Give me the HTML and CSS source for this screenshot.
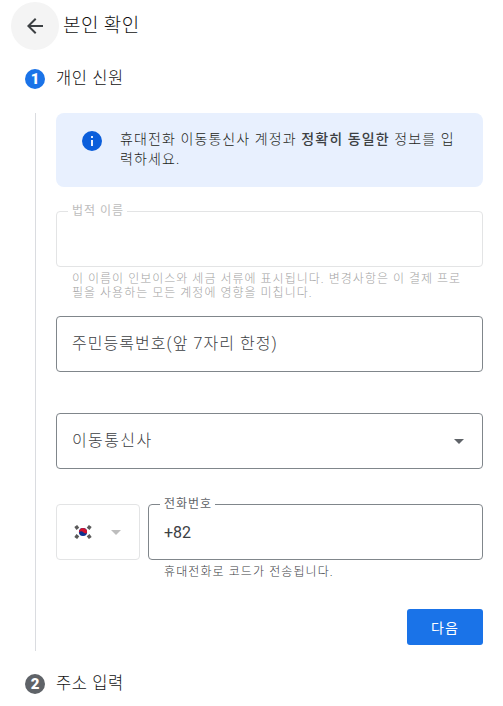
FILE: index.html
```html
<!DOCTYPE html>
<html lang="ko">
<head>
<meta charset="utf-8">
<title>본인 확인</title>
<link rel="stylesheet" href="styles.css">
</head>
<body>
<header class="header">
  <button class="back" aria-label="뒤로">
    <svg width="24" height="24" viewBox="0 0 24 24"><path fill="#3c4043" d="M20 11H7.83l5.59-5.59L12 4l-8 8 8 8 1.41-1.41L7.83 13H20z"/></svg>
  </button>
  <h1 class="title">본인 확인</h1>
</header>
<main>
  <div class="step step-first"><span class="num active">1</span><h2 class="step-title">개인 신원</h2></div>
  <section class="content">
    <div class="notice">
      <svg class="info" width="24" height="24" viewBox="0 0 24 24"><path fill="#0b5edb" d="M12 2a10 10 0 1 0 0 20 10 10 0 0 0 0-20zm1 15h-2v-6h2zm0-8h-2V7h2z"/></svg>
      <p class="notice-text">휴대전화 이동통신사 계정과 <b>정확히 동일한</b> 정보를 입<br>력하세요.</p>
    </div>
    <fieldset class="field name disabled"><legend>법적 이름</legend></fieldset>
    <p class="helper disabled-text">이 이름이 인보이스와 세금 서류에 표시됩니다. 변경사항은 이 결제 프로<br>필을 사용하는 모든 계정에 영향을 미칩니다.</p>
    <div class="field resident"><span class="label">주민등록번호(앞 7자리 한정)</span></div>
    <div class="field carrier"><span class="label carrier-label">이동통신사</span><svg width="10" height="5" viewBox="0 0 10 5"><path fill="#5f6368" d="M0 0h10L5 5z"/></svg></div>
    <div class="phone-row">
      <div class="field country">
        <svg width="18" height="14" viewBox="0 0 18 14">
          <g stroke="#5a5a5a" stroke-width="3.600">
            <path d="M1.400 3.500 4.200 1.400M13.800 1.400l2.800 2.100M1.400 10.500l2.800 2.100M13.800 12.600l2.800-2.100"/>
          </g>
          <circle cx="9" cy="7" r="4.100" fill="#0b318f"/>
          <path fill="#d2122e" d="M5.100 5.700A4.100 4.100 0 0 1 13 7.700C12 9 10 8.300 9 7S6 5.800 5 7.800z"/>
        </svg>
        <svg width="10" height="5" viewBox="0 0 10 5"><path fill="#bdbdbd" d="M0 0h10L5 5z"/></svg>
      </div>
      <div class="phone-col">
        <fieldset class="field phone"><legend>전화번호</legend><span class="value">+82</span></fieldset>
        <p class="helper phone-help">휴대전화로 코드가 전송됩니다.</p>
      </div>
    </div>
    <div class="actions"><button class="next">다음</button></div>
  </section>
  <div class="step step-last"><span class="num">2</span><h2 class="step-title">주소 입력</h2></div>
</main>
</body>
</html>
```

FILE: styles.css
```css
* { box-sizing: border-box; }
body { margin: 0; background: #fff; color: #111; font-family: Roboto, "Noto Sans CJK KR", sans-serif; overflow: hidden; }
h1, h2, p { margin: 0; font-weight: 300; white-space: nowrap; }
button { border: 0; padding: 0; font-family: inherit; }
svg { display: block; flex: none; }
.header { display: flex; align-items: center; height: 52px; padding: 0 0 0 11px; }
.back { width: 48px; height: 48px; border-radius: 50%; background: #f4f4f4; display: flex; align-items: center; justify-content: center; }
.title { font-size: 19px; line-height: 28px; letter-spacing: .4px; margin: 0 0 0 4px; }
.step { display: flex; align-items: center; height: 24px; padding-left: 25px; }
.step-first { margin-top: 15px; }
.num { width: 20px; height: 20px; border-radius: 50%; background: #5f6368; color: #fff; font: 900 15px/20px Roboto, sans-serif; text-align: center; }
.num.active { background: #1a73e8; }
.step-title { font-size: 16.5px; line-height: 24px; letter-spacing: .6px; margin: 0 0 0 11px; }
.content { margin: 22px 20px 0 35px; padding-left: 20px; border-left: 1px solid #dadce0; height: 538px; }
.notice { height: 74px; padding: 16px 0 0 24px; background: #e8f0fe; border-radius: 8px; display: flex; align-items: flex-start; }
.notice .info { margin: 0 16px 0 0; }
.notice-text { font-size: 14px; line-height: 20px; letter-spacing: 1.1px; color: #1c1e20; }
.notice-text b { font-weight: 500; color: #3c4043; }
.field { margin: 0; border: 1px solid #80868b; border-radius: 4px; height: 56px; min-width: 0; color: #5f6368; }
legend { font-size: 12px; line-height: 14px; letter-spacing: 1px; padding: 0 3px 0 4px; margin-left: 11px; height: 14px; }
.name { height: 63px; margin-top: 17px; padding: 0; }
.disabled { border-color: #e3e4e5; color: #bdbdbd; }
.helper { font-size: 12px; line-height: 14px; letter-spacing: 1px; color: #3c4043; padding-left: 16px; }
.disabled-text { color: #a4a4a4; margin-top: 5px; letter-spacing: 1.02px; }
.resident { margin-top: 16px; }
.carrier { margin-top: 41px; }
.resident, .carrier { display: flex; align-items: center; justify-content: space-between; padding: 0 18px 0 15px; }
.label { font-size: 16px; line-height: 24px; letter-spacing: 1.05px; white-space: nowrap; font-weight: 300; color: #3c4043; }
.carrier-label { letter-spacing: 1.4px; }
.phone-row { display: flex; gap: 8px; margin-top: 28px; }
.country { width: 84px; margin-top: 7px; display: flex; align-items: center; gap: 19px; padding-left: 17px; border-color: #e3e4e5; }
.phone-col { flex: 1; }
.phone { height: 63px; padding: 0 0 0 15px; }
.phone legend { margin-left: -4px; }
.value { display: block; font-size: 16px; line-height: 24px; margin-top: 10px; color: #3c4043; }
.phone-help { margin-top: 5px; letter-spacing: 1.1px; }
.actions { display: flex; justify-content: flex-end; margin-top: 30px; }
.next { width: 76px; height: 36px; border-radius: 3px; background: #1a73e8; color: #fff; font-size: 14px; letter-spacing: 1px; }
.step-last { margin-top: 21px; }
```
